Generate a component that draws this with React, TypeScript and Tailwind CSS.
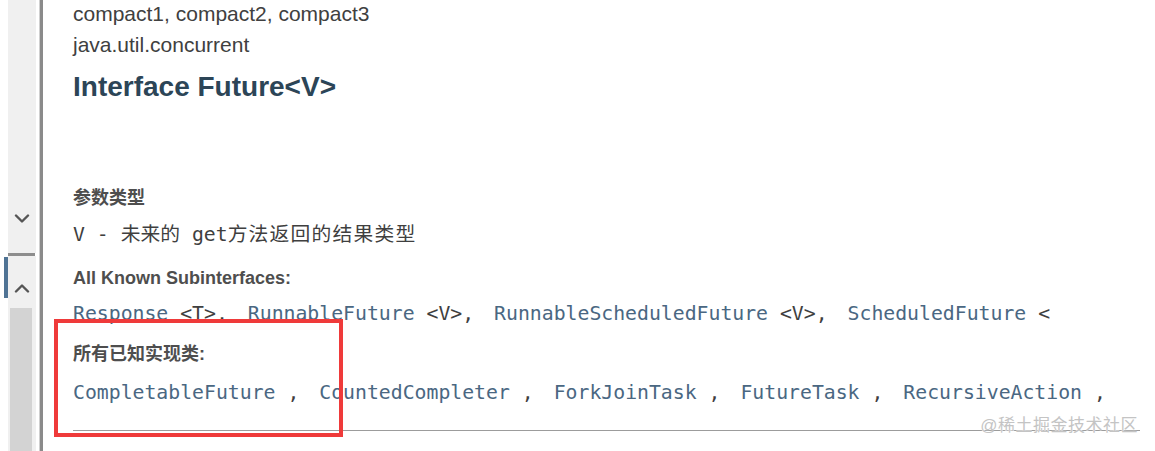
const SANS = { fontFamily: '"Liberation Sans", Arial, "Noto Sans CJK SC", sans-serif' };
const MONO = { fontFamily: '"DejaVu Sans Mono", "Noto Sans CJK SC", monospace' };

const SUBINTERFACES = [
  { name: 'Response', param: '<T>,' },
  { name: 'RunnableFuture', param: '<V>,' },
  { name: 'RunnableScheduledFuture', param: '<V>,' },
  { name: 'ScheduledFuture', param: '<' },
];

const IMPLEMENTATIONS = [
  'CompletableFuture',
  'CountedCompleter',
  'ForkJoinTask',
  'FutureTask',
  'RecursiveAction',
];

function Chevron({ up }: { up?: boolean }) {
  return (
    <svg width="16" height="10" viewBox="0 0 16 10" fill="none">
      <polyline
        points={up ? '2,8.5 8,2.5 14,8.5' : '2,1.5 8,7.5 14,1.5'}
        stroke="#555"
        strokeWidth="2.4"
        strokeLinecap="round"
        strokeLinejoin="round"
      />
    </svg>
  );
}

function SideRail() {
  return (
    <div className="flex h-full w-[39px] shrink-0 flex-col bg-white">
      {/* upper track with the down arrow */}
      <div className="flex h-[253px] pl-[8px] pr-[3px]">
        <div className="flex w-[28px] flex-col items-center justify-end bg-[#f0f0f0] pb-[29px]">
          <Chevron />
        </div>
      </div>
      <div className="ml-[8px] h-[3px] w-[27px] bg-[#8d8d8d]" />
      {/* lower track: up arrow + thumb */}
      <div className="flex flex-1">
        <div className="ml-[4px] mt-[1px] h-[41px] w-[4px] bg-[#4f7394]" />
        <div className="flex w-[28px] flex-col bg-[#f0f0f0]">
          <div className="flex h-[52px] items-start justify-center pt-[27px]">
            <Chevron up />
          </div>
          <div className="mx-[2px] mr-[4px] flex-1 bg-[#d3d3d3]" />
        </div>
      </div>
    </div>
  );
}

export default function App() {
  return (
    <div className="relative flex h-[451px] w-[1155px] overflow-hidden bg-white">
      <SideRail />
      <div className="h-full w-[1px] bg-[#cfcfcf]" />
      <div className="h-full w-[3px] bg-[#8a8a8a]" />

      <div className="flex flex-1 flex-col pl-[30px] pr-[15px]">
        <div className="h-[28px] text-[21px] leading-[28px] text-[#404040]" style={SANS}>
          compact1, compact2, compact3
        </div>
        <div className="h-[34px] text-[21px] leading-[34px] text-[#404040]" style={SANS}>
          java.util.concurrent
        </div>
        <h1 className="h-[50px] text-[28px] font-bold leading-[50px] text-[#2c4557]" style={SANS}>
          Interface Future&lt;V&gt;
        </h1>

        <div className="mt-[74px] h-[25px] text-[18px] font-bold leading-[25px] text-[#4e4e4e]" style={SANS}>
          参数类型
        </div>
        <div className="h-[48px] whitespace-pre text-[19.8px] leading-[48px] text-[#3f3f3f]" style={MONO}>
          {'V - 未来的 get'}
          <span className="tracking-[1.2px]">方法返回的结果类型</span>
        </div>

        <div className="h-[38px] text-[18px] font-bold leading-[38px] text-[#4e4e4e]" style={SANS}>
          All Known Subinterfaces:
        </div>
        <div className="flex h-[34px] whitespace-pre text-[19.8px] leading-[34px]" style={MONO}>
          {SUBINTERFACES.map((s) => (
            <span key={s.name} className="mr-[20px]">
              <span className="text-[#4a6782]">{s.name}</span>
              <span className="text-[#3f3f3f]">{' ' + s.param}</span>
            </span>
          ))}
        </div>

        <div className="h-[47px] text-[18px] font-bold leading-[47px] text-[#4e4e4e]" style={SANS}>
          所有已知实现类:
        </div>
        <div className="flex h-[29px] whitespace-pre text-[19.8px] leading-[29px]" style={MONO}>
          {IMPLEMENTATIONS.map((name, i) => (
            <span key={name} className={i < IMPLEMENTATIONS.length - 1 ? 'mr-[20px]' : ''}>
              <span className="text-[#4a6782]">{name}</span>
              <span className="text-[#3f3f3f]">{' ,'}</span>
            </span>
          ))}
        </div>

        <div className="mt-[23px] h-[1px] bg-[#9c9c9c]" />
      </div>

      {/* annotation box drawn over the screenshot */}
      <div className="pointer-events-none absolute left-[54px] top-[319px] h-[118px] w-[289px] border-[4px] border-[#ef3a3a]" />

      {/* watermark */}
      <div
        className="pointer-events-none absolute right-[17px] top-[414px] text-[17px] leading-[24px] tracking-[0.5px] text-[#c4c4c4]"
        style={{ ...SANS, textShadow: '0 0 1px #fff, 0 0 1px #fff' }}
      >
        @稀土掘金技术社区
      </div>
    </div>
  );
}
